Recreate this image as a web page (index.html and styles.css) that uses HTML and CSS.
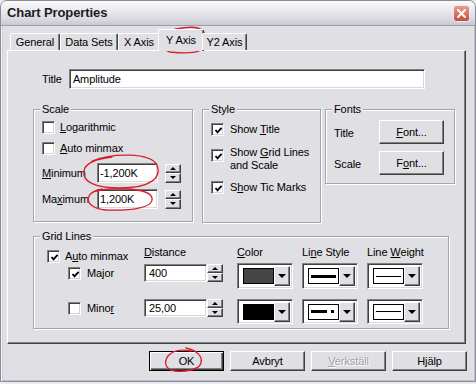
FILE: index.html
```html
<!DOCTYPE html>
<html>
<head>
<meta charset="utf-8">
<title>Chart Properties</title>
<link rel="stylesheet" href="styles.css">
</head>
<body>
<div class="window">
  <div class="titlebar">
    <span class="title">Chart Properties</span>
    <svg class="close" width="17" height="17" viewBox="0 0 17 17">
      <defs>
        <linearGradient id="cg" x1="0" y1="0" x2="0" y2="1">
          <stop offset="0" stop-color="#eea090"/>
          <stop offset="1" stop-color="#c4483c"/>
        </linearGradient>
      </defs>
      <rect x="0.5" y="0.5" width="16" height="16" rx="3" fill="url(#cg)" stroke="#ececf0"/>
      <path d="M5 5 L12 12 M12 5 L5 12" stroke="#fff" stroke-width="2" stroke-linecap="round"/>
    </svg>
  </div>
  <div class="client">
    <div class="tabs">
      <div class="tab t-general">General</div>
      <div class="tab t-data">Data Sets</div>
      <div class="tab t-x">X Axis</div>
      <div class="tab sel t-y">Y Axis</div>
      <div class="tab t-y2">Y2 Axis</div>
    </div>
    <div class="panel">
      <div class="title-row">
        <span>Title</span>
        <div class="edit title-edit">Amplitude</div>
      </div>
      <div class="groups">
        <div class="group scale">
          <span class="legend">Scale</span>
          <div class="col scale-body">
            <div class="chk-row r1"><span class="chk"></span><span><u>L</u>ogarithmic</span></div>
            <div class="chk-row r2"><span class="chk"></span><span><u>A</u>uto minmax</span></div>
            <div class="spin-row r3">
              <span class="spin-lbl"><u>M</u>inimum</span>
              <div class="edit num">-1,200K</div>
              <div class="updown"><span class="ud up"></span><span class="ud down"></span></div>
            </div>
            <div class="spin-row r4">
              <span class="spin-lbl">Ma<u>x</u>imum</span>
              <div class="edit num">1,200K</div>
              <div class="updown"><span class="ud up"></span><span class="ud down"></span></div>
            </div>
          </div>
        </div>
        <div class="group style">
          <span class="legend">Style</span>
          <div class="col style-body">
            <div class="chk-row s1"><span class="chk"><svg width="9" height="9" viewBox="0 0 9 9"><polyline points="1.5,4 3.5,6.3 7.6,1.8" fill="none" stroke="#000" stroke-width="1.8"/></svg></span><span>Show <u>T</u>itle</span></div>
            <div class="chk-row s2"><span class="chk top"><svg width="9" height="9" viewBox="0 0 9 9"><polyline points="1.5,4 3.5,6.3 7.6,1.8" fill="none" stroke="#000" stroke-width="1.8"/></svg></span><span>Show <u>G</u>rid Lines<br>and Scale</span></div>
            <div class="chk-row s3"><span class="chk"><svg width="9" height="9" viewBox="0 0 9 9"><polyline points="1.5,4 3.5,6.3 7.6,1.8" fill="none" stroke="#000" stroke-width="1.8"/></svg></span><span>S<u>h</u>ow Tic Marks</span></div>
          </div>
        </div>
        <div class="group fonts">
          <span class="legend">Fonts</span>
          <div class="col fonts-body">
            <div class="font-row f1"><span class="font-lbl">Title</span><div class="btn font-btn"><span><u>F</u>ont...</span></div></div>
            <div class="font-row f2"><span class="font-lbl">Scale</span><div class="btn font-btn"><span>F<u>o</u>nt...</span></div></div>
          </div>
        </div>
      </div>
      <div class="group grid">
        <span class="legend">Grid Lines</span>
        <div class="grid-table">
          <div class="chk-row auto"><span class="chk"><svg width="9" height="9" viewBox="0 0 9 9"><polyline points="1.5,4 3.5,6.3 7.6,1.8" fill="none" stroke="#000" stroke-width="1.8"/></svg></span><span>A<u>u</u>to minmax</span></div>
          <span class="hdr"><u>D</u>istance</span>
          <span class="hdr"><u>C</u>olor</span>
          <span class="hdr">Li<u>n</u>e Style</span>
          <span class="hdr">Line <u>W</u>eight</span>

          <div class="chk-row major"><span class="chk"><svg width="9" height="9" viewBox="0 0 9 9"><polyline points="1.5,4 3.5,6.3 7.6,1.8" fill="none" stroke="#000" stroke-width="1.8"/></svg></span><span>Major</span></div>
          <div class="dist d1"><div class="edit dist-edit">400</div><div class="updown small"><span class="ud up"></span><span class="ud down"></span></div></div>
          <div class="combo"><span class="val swatch dark"></span><span class="drop"></span></div>
          <div class="combo"><span class="val"><span class="ln thick"></span></span><span class="drop"></span></div>
          <div class="combo"><span class="val"><span class="ln thin"></span></span><span class="drop"></span></div>

          <div class="chk-row minor"><span class="chk"></span><span>Mino<u>r</u></span></div>
          <div class="dist d2"><div class="edit dist-edit">25,00</div><div class="updown small"><span class="ud up"></span><span class="ud down"></span></div></div>
          <div class="combo"><span class="val swatch black"></span><span class="drop"></span></div>
          <div class="combo"><span class="val"><span class="ln dash"></span><span class="ln dot"></span></span><span class="drop"></span></div>
          <div class="combo"><span class="val"><span class="ln thin"></span></span><span class="drop"></span></div>
        </div>
      </div>
    </div>
    <div class="buttons">
      <div class="btn default"><span>OK</span></div>
      <div class="btn"><span>Avbryt</span></div>
      <div class="btn disabled"><span><u>V</u>erkställ</span></div>
      <div class="btn"><span>Hjälp</span></div>
    </div>
  </div>
  <svg class="annot" width="476" height="384" viewBox="0 0 476 384">
    <path d="M164 48 C161 39 166 31 176 29 C186 27 197 26 202 30 C207 34 206 46 201 50 C195 54 180 53 170 52 C165 51 162 46 163 38" />
    <path d="M92 161 C112 153 150 152 157 165 C162 178 150 188 120 188 C96 188 82 182 84 171 C85 163 95 159 112 157" />
    <path d="M93 192 C112 186 150 188 152 198 C154 208 130 211 106 210 C93 209 86 203 89 196 C91 192 97 190 102 189" />
    <path d="M186 348 C196 350 203 356 201 363 C199 370 185 372 175 371 C166 370 163 363 168 356 C172 351 180 349 191 351" />
  </svg>
</div>
</body>
</html>
```

FILE: styles.css
```css
* { box-sizing: border-box; }
html, body { margin: 0; padding: 0; }
body {
  width: 476px;
  height: 384px;
  overflow: hidden;
  background: #ececf0;
  font: 11px/13px "Liberation Sans", Arial, sans-serif;
  letter-spacing: -0.1px;
  color: #000;
  white-space: nowrap;
}
u { text-decoration: underline; text-underline-offset: 1px; }

.window {
  position: relative;
  width: 476px;
  height: 382px;
  border: 1px solid #8a8a98;
  border-radius: 7px 7px 0 0;
  background: #e0dfe3;
  box-shadow: inset 1px 0 0 #f4f4f7, inset 2px 0 0 #d0d0d8, inset -1px 0 0 #c0c0cc, inset 0 -1px 0 #c0c0cc;
}

.titlebar {
  height: 25px;
  display: flex;
  align-items: center;
  justify-content: space-between;
  padding: 0 5px 0 6px;
  background: linear-gradient(#fbfbfd, #ebebf0 35%, #dadae2 75%, #c8c8d2);
  border-bottom: 1px solid #9c9caa;
  border-radius: 6px 6px 0 0;
}
.title {
  font: bold 13px/16px "Liberation Sans", Arial, sans-serif;
  letter-spacing: -0.1px;
  color: #1c1c1c;
}
.close { display: block; margin-top: 1px; }

.client { padding: 3px 0 0 6px; }

.tabs {
  position: relative;
  z-index: 1;
  display: flex;
  align-items: flex-end;
  height: 21px;
  padding-left: 3px;
}
.tab {
  height: 17px;
  padding-top: 1px;
  line-height: 15px;
  text-align: center;
  background: #e0dfe3;
  border: 1px solid #fff;
  border-bottom: none;
  border-right-color: #404040;
  border-radius: 2px 2px 0 0;
  box-shadow: inset -1px 0 0 #808080;
}
.t-general { width: 50px; }
.t-data { width: 58px; }
.t-x { width: 42px; }
.t-y { width: 46px; }
.t-y2 { width: 45px; }
.tab.sel {
  height: 22px;
  margin: 0 -2px -1px -2px;
  padding-top: 3px;
}

.panel {
  width: 459px;
  height: 294px;
  border: 1px solid;
  border-color: #fff #404040 #404040 #fff;
  box-shadow: inset -1px -1px 0 #808080;
}

.edit {
  display: flex;
  align-items: center;
  background: #fff;
  border: 1px solid;
  border-color: #808080 #fff #fff #808080;
  box-shadow: inset 1px 1px 0 #404040, inset -1px -1px 0 #d8d8dc;
  padding: 0 2px 0 3px;
  white-space: nowrap;
}

.title-row {
  display: flex;
  align-items: center;
  gap: 7px;
  margin-top: 18px;
  padding-left: 34px;
}
.title-edit { width: 356px; height: 20px; }

.groups {
  display: flex;
  align-items: flex-start;
  margin-top: 20px;
  padding-left: 25px;
}
.group {
  border: 1px solid #a6a5ad;
  box-shadow: 1px 1px 0 #fff, inset 1px 1px 0 #fff;
}
.legend {
  display: block;
  width: max-content;
  height: 13px;
  margin: -7px 0 0 6px;
  padding: 0 2px;
  background: #e0dfe3;
  line-height: 13px;
}
.col { display: flex; flex-direction: column; }

.scale { width: 160px; height: 113px; margin-right: 9px; }
.scale-body { padding-left: 8px; }
.r1 { margin-top: 5px; }
.r2 { margin-top: 8px; }
.r3 { margin-top: 8px; }
.r4 { margin-top: 6px; }

.chk-row { display: flex; align-items: center; gap: 5px; line-height: 13px; }
.chk {
  flex: none;
  display: flex;
  align-items: center;
  justify-content: center;
  width: 13px;
  height: 13px;
  background: #fff;
  border: 1px solid;
  border-color: #808080 #fff #fff #808080;
  box-shadow: inset 1px 1px 0 #404040, inset -1px -1px 0 #d4d4d8;
}
.chk svg { display: block; margin: 1px 0 0 1px; }

.spin-row { display: flex; align-items: center; }
.spin-lbl { width: 55px; }
.num { width: 61px; height: 20px; padding-left: 2px; }
.updown {
  display: flex;
  flex-direction: column;
  width: 16px;
  height: 19px;
  margin-left: 7px;
}
.updown.small { margin-left: 0; height: 18px; }
.ud {
  flex: 1;
  display: flex;
  align-items: center;
  justify-content: center;
  background: #e0dfe3;
  border: 1px solid;
  border-color: #fff #404040 #404040 #fff;
  box-shadow: inset -1px -1px 0 #808080;
}
.ud.up::after {
  content: "";
  width: 0; height: 0;
  border-left: 3px solid transparent;
  border-right: 3px solid transparent;
  border-bottom: 3px solid #000;
}
.ud.down::after {
  content: "";
  width: 0; height: 0;
  border-left: 3px solid transparent;
  border-right: 3px solid transparent;
  border-top: 3px solid #000;
}

.style { width: 119px; height: 114px; margin-right: 4px; }
.style-body { padding-left: 8px; }
.style-body .chk-row { gap: 6px; }
.s1 { margin-top: 7px; }
.s2 { margin-top: 10px; align-items: flex-start; }
.s2 .chk { margin-top: 3px; }
.s3 { margin-top: 9px; }

.fonts { width: 130px; height: 75px; }
.fonts-body { padding-left: 8px; }
.font-row { display: flex; align-items: center; }
.f1 { margin-top: 4px; }
.f2 { margin-top: 7px; }
.font-lbl { width: 45px; padding-top: 3px; }
.font-btn { width: 65px; height: 24px; }

.btn {
  display: flex;
  align-items: center;
  justify-content: center;
  background: #e0dfe3;
  border: 1px solid;
  border-color: #fff #404040 #404040 #fff;
  box-shadow: inset -1px -1px 0 #808080;
}

.grid {
  width: 416px;
  height: 93px;
  margin: 13px 0 0 25px;
}
.grid-table {
  display: grid;
  grid-template-columns: 97px 93px 65px 65px 55px;
  grid-template-rows: 16px 36px 26px;
  align-items: start;
  margin-top: 4px;
  padding-left: 13px;
}
.auto { margin-top: 3px; }
.hdr { margin-top: -1px; white-space: nowrap; }
.major { margin: 4px 0 0 21px; gap: 6px; }
.minor { margin: 3px 0 0 21px; gap: 6px; }
.dist { display: flex; }
.d1 { margin-top: 1px; }
.dist-edit { width: 63px; height: 18px; padding-left: 4px; }

.combo {
  display: flex;
  align-items: center;
  width: 56px;
  height: 26px;
  padding: 2px;
  background: #fff;
  border: 1px solid;
  border-color: #808080 #fff #fff #808080;
  box-shadow: inset 1px 1px 0 #404040, inset -1px -1px 0 #d8d8dc;
}
.grid-table > .combo:nth-child(n+11) { height: 25px; }
.val {
  position: relative;
  display: flex;
  align-items: center;
  width: 31px;
  height: 16px;
  margin-left: 3px;
  border: 1px solid #000;
  background: #fff;
  padding: 0 2px;
}
.swatch.dark { background: #454545; }
.swatch.black { background: #000; }
.ln { display: block; background: #000; }
.ln.thick { width: 100%; height: 3px; }
.ln.thin { width: 100%; height: 1px; }
.ln.dash { width: 16px; height: 3px; }
.ln.dot { width: 3px; height: 3px; margin-left: 4px; }
.drop {
  display: flex;
  align-items: center;
  justify-content: center;
  width: 16px;
  height: 20px;
  margin-left: auto;
  background: #e0dfe3;
  border: 1px solid;
  border-color: #fff #404040 #404040 #fff;
  box-shadow: inset -1px -1px 0 #808080;
}
.drop::after {
  content: "";
  width: 0; height: 0;
  border-left: 4px solid transparent;
  border-right: 4px solid transparent;
  border-top: 4px solid #000;
}

.buttons {
  display: flex;
  justify-content: flex-end;
  gap: 6px;
  width: 460px;
  margin-top: 7px;
}
.buttons .btn { width: 75px; height: 20px; }
.btn.default {
  border: 1px solid #000;
  box-shadow: inset 1px 1px 0 #fff, inset -1px -1px 0 #404040, inset -2px -2px 0 #808080;
}
.btn.disabled { color: #a2a2a8; text-shadow: 1px 1px 0 #fff; }

.annot {
  position: absolute;
  left: -1px;
  top: -1px;
  pointer-events: none;
}
.annot path {
  fill: none;
  stroke: #d81e2c;
  stroke-width: 1.3;
  stroke-linecap: round;
}
```
